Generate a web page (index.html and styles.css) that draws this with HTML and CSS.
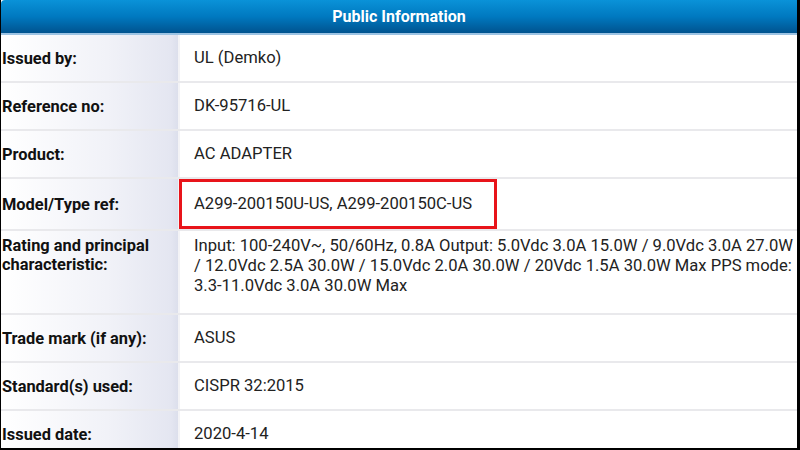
FILE: index.html
```html
<!DOCTYPE html>
<html lang="en">
<head>
    <meta charset="UTF-8">
    <meta name="viewport" content="width=device-width, initial-scale=1.0">
    <title>Public Information</title>
    <link rel="stylesheet" href="styles.css">
</head>
<body>
    <div class="frame">
        <div class="info-panel">
            <div class="info-header">Public Information</div>

            <table class="info-table">
                <tbody>
                    <tr>
                        <th>Issued by:</th>
                        <td>UL (Demko)</td>
                    </tr>
                    <tr>
                        <th>Reference no:</th>
                        <td>DK-95716-UL</td>
                    </tr>
                    <tr>
                        <th>Product:</th>
                        <td>AC ADAPTER</td>
                    </tr>
                    <tr>
                        <th>Model/Type ref:</th>
                        <td><span class="highlight">A299-200150U-US, A299-200150C-US</span></td>
                    </tr>
                    <tr class="multi-line">
                        <th>Rating and principal characteristic:</th>
                        <td>Input: 100-240V~, 50/60Hz, 0.8A Output: 5.0Vdc 3.0A 15.0W / 9.0Vdc 3.0A 27.0W / 12.0Vdc 2.5A 30.0W / 15.0Vdc 2.0A 30.0W / 20Vdc 1.5A 30.0W Max PPS mode: 3.3-11.0Vdc 3.0A 30.0W Max</td>
                    </tr>
                    <tr>
                        <th>Trade mark (if any):</th>
                        <td>ASUS</td>
                    </tr>
                    <tr>
                        <th>Standard(s) used:</th>
                        <td>CISPR 32:2015</td>
                    </tr>
                    <tr>
                        <th>Issued date:</th>
                        <td>2020-4-14</td>
                    </tr>
                </tbody>
            </table>
        </div>
    </div>
</body>
</html>
```

FILE: styles.css
```css
body {
    margin: 0;
    padding: 0;
    background-color: #000;
    font-family: Roboto, 'Liberation Sans', sans-serif;
}

.frame {
    height: 448px;
    margin: 0 3px 0 1px;
    background: white;
    overflow: hidden;
}

.info-header {
    height: 33px;
    line-height: 33px;
    text-align: center;
    color: white;
    font-size: 16px;
    font-weight: bold;
    background: linear-gradient(to bottom, #0a92d8 0%, #0079c0 50%, #00538f 100%);
    border-bottom: 2px solid #9cc3e3;
    border-top-left-radius: 4px;
}

.info-table {
    width: 100%;
    border-collapse: collapse;
    font-size: 16.6px;
}

.info-table th,
.info-table td {
    height: 46px;
    padding: 0;
    border-bottom: 2px solid #e9e9ec;
    vertical-align: middle;
    text-align: left;
}

.info-table th {
    width: 176px;
    padding-left: 1px;
    color: #111;
    font-weight: bold;
    font-size: 16.4px;
    line-height: 19px;
    background: linear-gradient(to right, #ffffff 0%, #f1f2f8 60%, #e4e6f1 96%, #dcdfec 100%);
    border-right: 2px solid #f3f3f6;
}

.info-table td {
    padding-left: 14px;
    padding-right: 1px;
    color: #222;
    line-height: 20px;
}

.info-table .multi-line th,
.info-table .multi-line td {
    height: 77px;
    vertical-align: top;
    padding-top: 5px;
}

.highlight {
    display: inline-block;
    margin-left: -15px;
    padding: 12px 22px 12px 12px;
    border: 3px solid #e8141a;
}
```
